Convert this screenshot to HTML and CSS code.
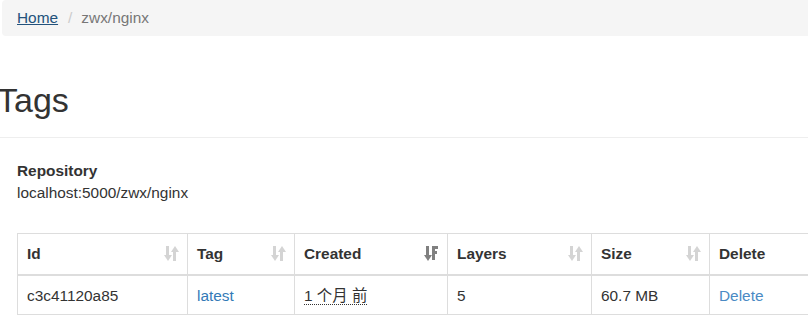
FILE: index.html
```html
<!DOCTYPE html>
<html lang="en">
<head>
  <meta charset="UTF-8" />
  <title>zwx/nginx - Tags</title>
  <link rel="stylesheet" href="styles.css">
</head>
<body>
  <div class="page">
    <ol class="breadcrumb">
      <li><a href="#">Home</a></li>
      <li class="active">zwx/nginx</li>
    </ol>

    <div class="page-header">
      <h1>Tags</h1>
    </div>

    <div class="repo">
      <label>Repository</label>
      <div>localhost:5000/zwx/nginx</div>
    </div>

    <table class="tags-table">
      <thead>
        <tr>
          <th class="col-id"><div class="th-inner">Id <span class="sort both"></span></div></th>
          <th class="col-tag"><div class="th-inner">Tag <span class="sort both"></span></div></th>
          <th class="col-created"><div class="th-inner">Created <span class="sort desc"></span></div></th>
          <th class="col-layers"><div class="th-inner">Layers <span class="sort both"></span></div></th>
          <th class="col-size"><div class="th-inner">Size <span class="sort both"></span></div></th>
          <th class="col-delete"><div class="th-inner">Delete</div></th>
        </tr>
      </thead>
      <tbody>
        <tr>
          <td>c3c41120a85</td>
          <td><a href="#">latest</a></td>
          <td><abbr title="2017-05-02">1 个月 前</abbr></td>
          <td>5</td>
          <td>60.7 MB</td>
          <td><a href="#" class="del">Delete</a></td>
        </tr>
      </tbody>
    </table>
  </div>
</body>
</html>
```

FILE: styles.css
```css
html, body {
  overflow: hidden;
}

body {
  margin: 0;
  font-family: "Liberation Sans", Arial, sans-serif;
  font-size: 15.4px;
  line-height: 20px;
  color: #333;
  background: #fff;
}

a {
  color: #337ab7;
  text-decoration: none;
}

.page {
  width: 840px;
}

.breadcrumb {
  list-style: none;
  margin: 0 0 0 2px;
  padding: 8px 15px;
  background: #f5f5f5;
  border-radius: 4px;
  display: flex;
}

.breadcrumb li a {
  text-decoration: underline;
  color: #23527c;
}

.breadcrumb li + li:before {
  content: "/";
  color: #ccc;
  padding: 0 9px 0 10px;
}

.breadcrumb .active {
  color: #777;
}

.page-header {
  margin: 46px 0 20px;
  padding-bottom: 8px;
  border-bottom: 1px solid #eee;
}

.page-header h1 {
  margin: 0 0 10px -3px;
  font-size: 34px;
  font-weight: 500;
  line-height: 1.1;
  color: #333;
}

.repo {
  margin: 0 0 0 17px;
  padding-top: 3px;
}

.repo label {
  display: block;
  font-weight: bold;
  margin-bottom: 2px;
}

.tags-table {
  margin: 30px 0 0 17px;
  border-collapse: collapse;
  border: 1px solid #ddd;
}

.tags-table th,
.tags-table td {
  border: 1px solid #ddd;
  text-align: left;
  vertical-align: middle;
}

.tags-table th {
  padding: 0;
  font-weight: bold;
  border-bottom: 2px solid #ddd;
}

.th-inner {
  position: relative;
  padding: 8px 30px 8px 9px;
  line-height: 24px;
}

.tags-table td {
  padding: 10px 9px 8px;
}

.col-id { width: 169px; }
.col-tag { width: 106px; }
.col-created { width: 152px; }
.col-layers { width: 143px; }
.col-size { width: 117px; }
.col-delete { width: 120px; }

.sort {
  position: absolute;
  right: 9px;
  top: 12px;
  width: 14px;
  height: 15px;
}

.sort.both {
  background:
    linear-gradient(#d4d4d4, #d4d4d4) 2px 0 / 3px 10px no-repeat,
    linear-gradient(#d4d4d4, #d4d4d4) 9px 5px / 3px 10px no-repeat;
}

.sort.both:before,
.sort.both:after {
  content: "";
  position: absolute;
  border-left: 4px solid transparent;
  border-right: 4px solid transparent;
}

.sort.both:before {
  left: -0.5px;
  top: 9px;
  border-top: 6px solid #d4d4d4;
}

.sort.both:after {
  left: 6.5px;
  top: 0;
  border-bottom: 6px solid #d4d4d4;
}

.sort.desc {
  background:
    linear-gradient(#808080, #808080) 2px 0 / 3px 10px no-repeat,
    linear-gradient(#808080, #808080) 8px 0 / 7px 3px no-repeat,
    linear-gradient(#808080, #808080) 8px 5px / 5px 3px no-repeat,
    linear-gradient(#808080, #808080) 8px 10px / 3px 3px no-repeat,
    linear-gradient(#808080, #808080) 8px 0 / 3px 14px no-repeat;
}

.sort.desc:before {
  content: "";
  position: absolute;
  left: -0.5px;
  top: 9px;
  border-left: 4px solid transparent;
  border-right: 4px solid transparent;
  border-top: 6px solid #808080;
}

abbr {
  text-decoration: none;
  border-bottom: 1px dotted #333;
  font-family: "Liberation Sans", "Noto Sans CJK SC", sans-serif;
}

.del {
  color: #4a8ac4;
}
```
